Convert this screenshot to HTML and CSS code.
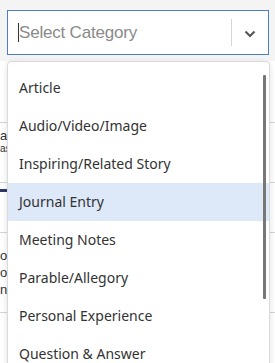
FILE: index.html
```html
<!DOCTYPE html>
<html lang="en">
<head>
	<meta charset="UTF-8">
	<title>Select Category</title>
	<link rel="stylesheet" href="styles.css">
</head>
<body>
	<div class="page">
		<div class="top">
			<div class="select">
				<span class="caret"></span>
				<span class="placeholder">Select Category</span>
				<span class="sep"></span>
				<span class="chevron">
					<svg width="12" height="8" viewBox="0 0 12 8"><path d="M1.5 1.5 L6 6 L10.5 1.5" fill="none" stroke="#555" stroke-width="2"/></svg>
				</span>
			</div>
		</div>

		<div class="behind">
			<div class="row row_a"></div>
			<div class="row row_b">
				<span>al</span>
				<span class="small">as</span>
			</div>
			<div class="row row_c"><span class="tab"></span></div>
			<div class="row row_d">
				<span>oc</span>
				<span>or</span>
				<span>n</span>
			</div>
			<div class="row row_e"></div>
		</div>

		<div class="menu">
			<div class="scroll"></div>
			<ul>
				<li>Article</li>
				<li>Audio/Video/Image</li>
				<li>Inspiring/Related Story</li>
				<li class="active">Journal Entry</li>
				<li>Meeting Notes</li>
				<li>Parable/Allegory</li>
				<li>Personal Experience</li>
				<li>Question &amp; Answer</li>
			</ul>
		</div>
	</div>
</body>
</html>
```

FILE: styles.css
```css
body {
	margin: 0;
	background-color: #F4F4F4;
	font-family: "Liberation Sans", Arial, sans-serif;
	overflow: hidden;
}

.page {
	position: relative;
	height: 363px;
	overflow: hidden;
}

.top {
	padding: 10px 6px 0 7px;
}

.select {
	display: flex;
	align-items: center;
	height: 45px;
	background-color: #FFFFFF;
	border: 1px solid #4A80C8;
	box-sizing: border-box;
	padding-left: 10px;
}

.caret {
	width: 1px;
	height: 19px;
	background-color: #333;
}

.placeholder {
	flex-grow: 1;
	color: #8A8A8A;
	font-size: 17px;
	letter-spacing: -0.2px;
}

.sep {
	width: 1px;
	height: 27px;
	background-color: #D6D6D6;
}

.chevron {
	width: 36px;
	display: flex;
	justify-content: center;
	padding-top: 2px;
}

.behind {
	background-color: #FFFFFF;
	margin-top: 6px;
	height: 320px;
	color: #333;
	font-size: 13px;
}

.row {
	border-bottom: 1px solid #D5D5D5;
	box-sizing: border-box;
}

.row_a {
	height: 62px;
}

.row_b {
	height: 60px;
	padding-top: 6px;
	display: flex;
	flex-direction: column;
	line-height: 13px;
}

.row_b .small {
	font-size: 10px;
}

.row_c {
	height: 50px;
	padding-top: 6px;
}

.tab {
	display: block;
	width: 8px;
	height: 3px;
	background-color: #2C3A6B;
}

.row_d {
	height: 80px;
	padding-top: 14px;
	display: flex;
	flex-direction: column;
	line-height: 17px;
}

.row_e {
	height: 40px;
	border-bottom: none;
}

.menu {
	position: absolute;
	top: 61px;
	left: 7px;
	right: 5px;
	height: 330px;
	background-color: #FFFFFF;
	border: 1px solid #DADADA;
	border-radius: 4px;
	box-shadow: 0 2px 6px rgba(0, 0, 0, 0.12);
	font-family: "Noto Sans", "Open Sans", sans-serif;
}

.menu ul {
	list-style: none;
	margin: 0;
	padding: 7px 0 0 0;
}

.menu li {
	height: 38px;
	line-height: 38px;
	padding-left: 11px;
	font-size: 14px;
	color: #333333;
}

.menu li.active {
	background-color: #DDE8F8;
}

.scroll {
	position: absolute;
	top: 13px;
	right: 3px;
	width: 3px;
	height: 224px;
	background-color: #777777;
	border-radius: 1px;
}
```
